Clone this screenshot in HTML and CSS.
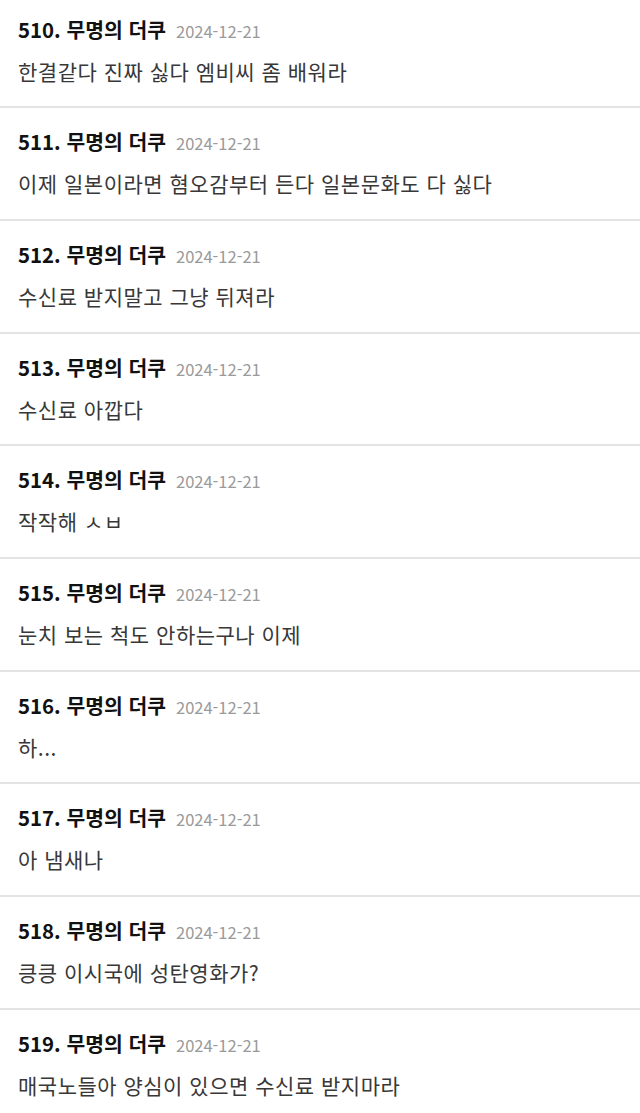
FILE: index.html
```html
<!DOCTYPE html>
<html lang="ko">

<head>
    <meta charset="UTF-8">
    <meta name="viewport" content="width=device-width, initial-scale=1.0">
    <title>댓글</title>
    <link rel="stylesheet" href="styles.css">
</head>

<body>
    <div class="comments">
        <div class="comment">
            <div class="comment-head"><span class="name">510. 무명의 더쿠</span><span class="date">2024-12-21</span></div>
            <div class="comment-body">한결같다 진짜 싫다 엠비씨 좀 배워라</div>
        </div>
        <div class="comment">
            <div class="comment-head"><span class="name">511. 무명의 더쿠</span><span class="date">2024-12-21</span></div>
            <div class="comment-body">이제 일본이라면 혐오감부터 든다 일본문화도 다 싫다</div>
        </div>
        <div class="comment">
            <div class="comment-head"><span class="name">512. 무명의 더쿠</span><span class="date">2024-12-21</span></div>
            <div class="comment-body">수신료 받지말고 그냥 뒤져라</div>
        </div>
        <div class="comment">
            <div class="comment-head"><span class="name">513. 무명의 더쿠</span><span class="date">2024-12-21</span></div>
            <div class="comment-body">수신료 아깝다</div>
        </div>
        <div class="comment">
            <div class="comment-head"><span class="name">514. 무명의 더쿠</span><span class="date">2024-12-21</span></div>
            <div class="comment-body">작작해 ㅅㅂ</div>
        </div>
        <div class="comment">
            <div class="comment-head"><span class="name">515. 무명의 더쿠</span><span class="date">2024-12-21</span></div>
            <div class="comment-body">눈치 보는 척도 안하는구나 이제</div>
        </div>
        <div class="comment">
            <div class="comment-head"><span class="name">516. 무명의 더쿠</span><span class="date">2024-12-21</span></div>
            <div class="comment-body">하...</div>
        </div>
        <div class="comment">
            <div class="comment-head"><span class="name">517. 무명의 더쿠</span><span class="date">2024-12-21</span></div>
            <div class="comment-body">아 냄새나</div>
        </div>
        <div class="comment">
            <div class="comment-head"><span class="name">518. 무명의 더쿠</span><span class="date">2024-12-21</span></div>
            <div class="comment-body">킁킁 이시국에 성탄영화가?</div>
        </div>
        <div class="comment">
            <div class="comment-head"><span class="name">519. 무명의 더쿠</span><span class="date">2024-12-21</span></div>
            <div class="comment-body">매국노들아 양심이 있으면 수신료 받지마라</div>
        </div>
    </div>
</body>

</html>
```

FILE: styles.css
```css
* {
    font-family: "Noto Sans CJK KR", "Noto Sans", sans-serif;
    box-sizing: border-box;
}

html,
body {
    margin: 0;
    padding: 0;
    background: #fff;
}

.comments {
    width: 640px;
}

.comment {
    padding: 19px 18px 21.7px;
    border-bottom: 2px solid #e4e4e4;
}

.comment:first-child {
    padding-top: 14.5px;
}

.comment-head {
    display: flex;
    align-items: baseline;
    gap: 10px;
    line-height: 28px;
}

.name {
    font-size: 20.4px;
    font-weight: 700;
    color: #111;
}

.date {
    font-size: 16.5px;
    color: #9a9a9a;
}

.comment-body {
    margin-top: 12px;
    font-size: 21px;
    letter-spacing: 0.5px;
    line-height: 28px;
    color: #383838;
}
```
